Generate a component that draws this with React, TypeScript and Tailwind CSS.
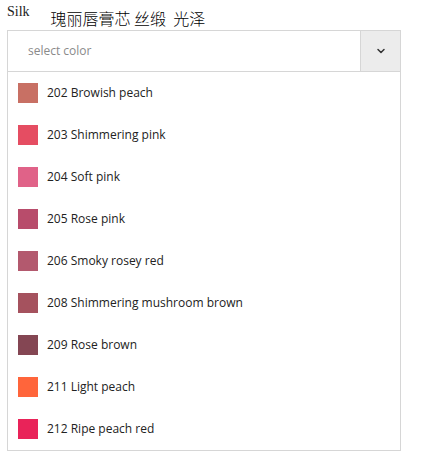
import { ChevronDown } from "lucide-react";

const colors = [
  { name: "202 Browish peach", hex: "#c87064" },
  { name: "203 Shimmering pink", hex: "#e54d62" },
  { name: "204 Soft pink", hex: "#e06288" },
  { name: "205 Rose pink", hex: "#b84c6b" },
  { name: "206 Smoky rosey red", hex: "#b3596e" },
  { name: "208 Shimmering mushroom brown", hex: "#a5525e" },
  { name: "209 Rose brown", hex: "#844653" },
  { name: "211 Light peach", hex: "#ff653b" },
  { name: "212 Ripe peach red", hex: "#e92359" },
];

export default function App() {
  return (
    <div className="min-h-screen bg-white pl-[7px] pt-[4px]">
      <div className="flex items-start h-[26px]">
        <span className="font-['Liberation_Serif',serif] text-[14px] leading-[16px] text-[#222]">
          Silk
        </span>
        <span className="ml-[21px] mt-[5px] whitespace-pre font-['Noto_Sans_CJK_SC',sans-serif] font-light text-[16px] leading-[19px] text-black">
          瑰丽唇膏芯 丝缎  光泽
        </span>
      </div>
      <div className="w-[394px] border border-[#d6d6d6] font-['Open_Sans',sans-serif]">
        <div className="flex h-[41px] border-b border-[#d6d6d6]">
          <div className="flex-1 flex items-center pl-[20px] text-[12px] text-[#8a8a8a]">
            select color
          </div>
          <div className="w-[40px] flex items-center justify-center bg-[#ececec] border-l border-[#d6d6d6]">
            <ChevronDown className="w-[12px] h-[12px] text-[#333]" strokeWidth={3} />
          </div>
        </div>
        {colors.map((c) => (
          <div key={c.name} className="flex items-center h-[42px] pl-[10px]">
            <div className="w-[20px] h-[20px]" style={{ backgroundColor: c.hex }} />
            <span className="ml-[9px] text-[12px] text-[#222]">{c.name}</span>
          </div>
        ))}
      </div>
    </div>
  );
}
